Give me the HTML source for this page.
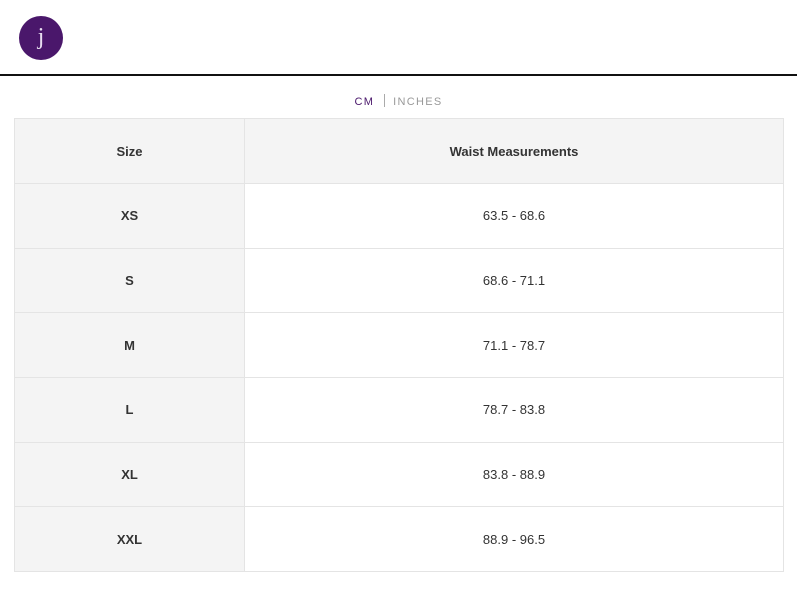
<!DOCTYPE html>
<html><head><meta charset="utf-8"><style>
*{margin:0;padding:0;box-sizing:border-box}
body{width:797px;height:601px;background:#fff;font-family:"Liberation Sans",sans-serif;position:relative;overflow:hidden}
.logo{position:absolute;left:19px;top:16px;width:44px;height:44px;border-radius:50%;background:#4a176b;color:#e8dff0;font-family:"Liberation Serif",serif;font-size:24px;line-height:42px;text-align:center}
.hr{position:absolute;left:0;top:74px;width:797px;height:1.5px;background:#111}
.units{position:absolute;top:94px;left:0;width:797px;text-align:center;font-size:11px;letter-spacing:1.3px}
.units .cm{color:#4a176b}
.units .sep{display:inline-block;width:1px;height:13px;background:#aaa;vertical-align:-2px;margin:0 8px 0 10px}
.units .in{color:#999}
table{position:absolute;left:14px;top:118px;width:770px;border-collapse:collapse}
td{border:1px solid #e4e4e4;text-align:center;font-size:13px;color:#333;height:64.7px}
td.a{width:230px;background:#f4f4f4;font-weight:bold}
tr.h td{background:#f4f4f4;font-weight:bold;height:65px}
</style></head><body>
<div class="logo">j</div>
<div class="hr"></div>
<div class="units"><span class="cm">CM</span><span class="sep"></span><span class="in">INCHES</span></div>
<table>
<tr class="h"><td class="a">Size</td><td>Waist Measurements</td></tr>
<tr><td class="a">XS</td><td>63.5 - 68.6</td></tr>
<tr><td class="a">S</td><td>68.6 - 71.1</td></tr>
<tr><td class="a">M</td><td>71.1 - 78.7</td></tr>
<tr><td class="a">L</td><td>78.7 - 83.8</td></tr>
<tr><td class="a">XL</td><td>83.8 - 88.9</td></tr>
<tr><td class="a">XXL</td><td>88.9 - 96.5</td></tr>
</table>
</body></html>
